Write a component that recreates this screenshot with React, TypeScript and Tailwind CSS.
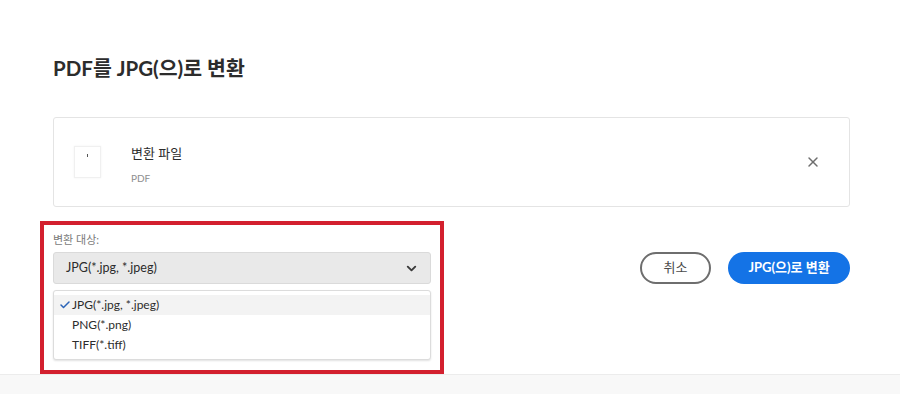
import { ChevronDown, X, Check } from 'lucide-react';

const font = { fontFamily: 'Lato, "Noto Sans CJK KR", sans-serif' };

export default function App() {
  const options = ['JPG(*.jpg, *.jpeg)', 'PNG(*.png)', 'TIFF(*.tiff)'];

  return (
    <div className="w-[900px] h-[394px] bg-white flex flex-col overflow-hidden" style={font}>
      <div className="flex-1 pl-[53px] pr-[50px] pt-[54px]">
        <h1 className="text-[20.5px] leading-[28px] font-bold text-[#2c2c2c]">PDF를 JPG(으)로 변환</h1>

        <div className="mt-[35px] h-[90px] border border-[#e4e4e4] rounded-[3px] flex items-center pl-[20px] pr-[28px]">
          <div className="w-[27px] h-[32px] bg-white border border-[#f0f0f0] shadow-[0_0_2px_rgba(0,0,0,0.06)] flex justify-center pt-[7px]">
            <div className="w-[1px] h-[3px] bg-[#555]" />
          </div>
          <div className="ml-[30px] mt-[4px] flex flex-col">
            <span className="text-[13px] leading-[18px] text-[#2c2c2c]">변환 파일</span>
            <span className="mt-[9px] text-[10px] leading-[14px] text-[#8e8e8e]">PDF</span>
          </div>
          <X className="ml-auto w-[16px] h-[16px] text-[#6e6e6e]" strokeWidth={2.2} />
        </div>

        <div className="flex items-start">
          <div className="-ml-[13px] mt-[14px] w-[404px] h-[153px] border-4 border-[#d3202e] px-[9px] pt-[8px]">
            <div className="text-[11px] leading-[14px] text-[#7a7a7a]">변환 대상:</div>
            <div className="mt-[5px] h-[32px] bg-[#e9e9e9] border border-[#dadada] rounded-[3px] flex items-center pl-[12px] pr-[11px]">
              <span className="text-[12.5px] text-[#2c2c2c]">JPG(*.jpg, *.jpeg)</span>
              <ChevronDown className="ml-auto w-[15px] h-[15px] text-[#3a3a3a]" strokeWidth={3} />
            </div>
            <div className="mt-[6px] h-[70px] bg-white border border-[#dcdcdc] rounded-[3px] shadow-[0_1px_2px_rgba(0,0,0,0.12)] py-[4px]">
              {options.map((o, i) => (
                <div
                  key={o}
                  className={`h-[20px] flex items-center text-[12px] text-[#2c2c2c] ${i === 0 ? 'bg-[#f3f3f3]' : ''}`}
                >
                  <span className="w-[18px] flex justify-end pr-[1px]">
                    {i === 0 && <Check className="w-[12px] h-[12px] text-[#2b64b8]" strokeWidth={3} />}
                  </span>
                  <span>{o}</span>
                </div>
              ))}
            </div>
          </div>

          <div className="ml-auto mt-[45px] flex items-center gap-[17px]">
            <button className="w-[71px] h-[32px] rounded-full border-2 border-[#6e6e6e] text-[13px] text-[#4b4b4b] flex items-center justify-center">
              취소
            </button>
            <button className="w-[122px] h-[32px] rounded-full bg-[#1473e6] text-[13px] font-bold text-white flex items-center justify-center">
              JPG(으)로 변환
            </button>
          </div>
        </div>
      </div>
      <div className="h-[21px] bg-[#f8f8f8] border-t border-[#ececec]" />
    </div>
  );
}
